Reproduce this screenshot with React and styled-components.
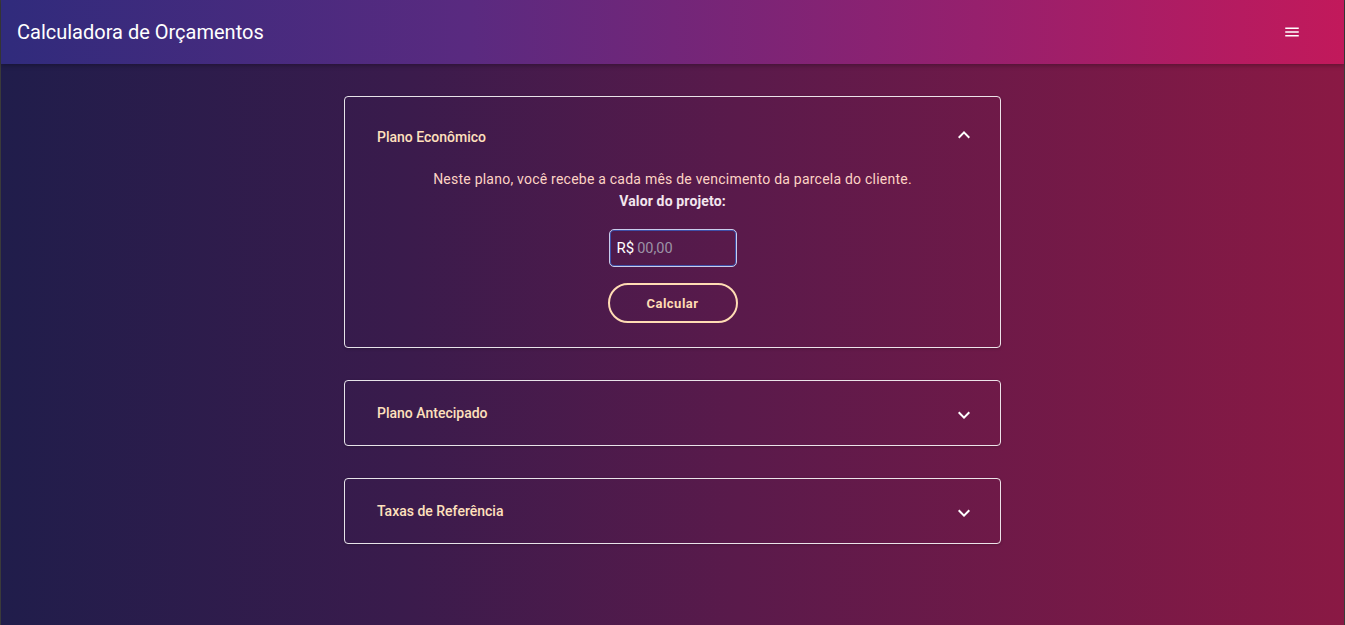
import React, { useState } from "react";
import styled, { createGlobalStyle } from "styled-components";

const GlobalStyle = createGlobalStyle`
  * { box-sizing: border-box; }
  html, body { margin: 0; padding: 0; }
  body {
    font-family: "Roboto", "Liberation Sans", sans-serif;
    background: #2b2b2b;
  }
`;

const Page = styled.div`
  min-height: 625px;
  border-left: 1px solid #3a3a3a;
  border-right: 1px solid #3a3a3a;
  background: linear-gradient(90deg, #201d4b 0%, #3a1b4c 30%, #5a1a4b 55%, #8a1944 100%);
  display: flex;
  flex-direction: column;
`;

const TopBar = styled.header`
  height: 64px;
  display: flex;
  align-items: center;
  justify-content: space-between;
  padding: 0 40px 0 16px;
  background: linear-gradient(90deg, #302b7c 0%, #5a2a80 35%, #8a2272 65%, #c2195b 100%);
  box-shadow: 0 2px 4px rgba(0, 0, 0, 0.25);
`;

const Title = styled.h1`
  margin: 0;
  font-size: 20px;
  font-weight: 400;
  color: #ffffff;
  letter-spacing: 0;
`;

const MenuButton = styled.button`
  width: 24px;
  height: 24px;
  padding: 0;
  border: none;
  background: none;
  display: flex;
  align-items: center;
  justify-content: center;
  color: #ffffff;
`;

const Content = styled.main`
  width: 657px;
  margin: 32px auto 0;
  display: flex;
  flex-direction: column;
  gap: 32px;
`;

const Card = styled.section`
  border: 1px solid rgba(255, 255, 255, 0.88);
  border-radius: 4px;
  box-shadow: 0 1px 3px rgba(0, 0, 0, 0.2);
`;

const Summary = styled.div`
  display: flex;
  align-items: flex-start;
  justify-content: space-between;
  height: ${(p) => (p.$open ? "71px" : "64px")};
  padding: ${(p) => (p.$open ? "32px" : "24px")} 24px 0 32px;
  cursor: pointer;
`;

const SummaryTitle = styled.span`
  font-size: 14px;
  line-height: 16px;
  font-weight: 500;
  color: #ffe0bd;
`;

const Chevron = styled.span`
  width: 24px;
  height: 24px;
  margin-top: ${(p) => (p.$open ? "-6px" : "-2px")};
  color: #ffffff;
  display: flex;
`;

const Details = styled.div`
  display: flex;
  flex-direction: column;
  align-items: center;
  padding-bottom: 24px;
`;

const Description = styled.p`
  margin: 0;
  font-size: 14px;
  line-height: 22px;
  letter-spacing: 0.23px;
  color: #fdd3c4;
`;

const Label = styled.p`
  margin: 0;
  font-size: 14px;
  line-height: 22px;
  font-weight: 700;
  letter-spacing: 0.15px;
  color: #f3e6ee;
`;

const InputBox = styled.label`
  margin-top: 17px;
  width: 128px;
  height: 38px;
  display: flex;
  align-items: center;
  gap: 3px;
  padding: 0 7px;
  border: 1px solid #c9cdec;
  box-shadow: inset 0 0 0 1px #3f4fa8;
  border-radius: 5px;
`;

const Prefix = styled.span`
  font-size: 15px;
  color: #ffffff;
`;

const Field = styled.input`
  width: 80px;
  border: none;
  background: transparent;
  outline: none;
  padding: 0;
  font-family: inherit;
  font-size: 14.5px;
  color: #ffffff;
  &::placeholder {
    color: #9c93a6;
  }
`;

const CalcButton = styled.button`
  margin-top: 16px;
  width: 130px;
  height: 40px;
  border: 2px solid #ffdcb4;
  border-radius: 20px;
  background: transparent;
  font-family: inherit;
  font-size: 13px;
  font-weight: 700;
  letter-spacing: 0.5px;
  color: #ffdcb4;
  cursor: pointer;
`;

const ExpandIcon = ({ up }) => (
  <svg width="24" height="24" viewBox="0 0 24 24" fill="currentColor">
    {up ? (
      <path d="m12 8-6 6 1.41 1.41L12 10.83l4.59 4.58L18 14z" />
    ) : (
      <path d="M16.59 8.59 12 13.17 7.41 8.59 6 10l6 6 6-6z" />
    )}
  </svg>
);

const MenuIcon = () => (
  <svg width="18" height="18" viewBox="0 0 24 24" fill="currentColor">
    <path d="M3 18h18v-2H3zm0-5h18v-2H3zm0-7v2h18V6z" />
  </svg>
);

const plans = [
  {
    id: "economico",
    title: "Plano Econômico",
    text: "Neste plano, você recebe a cada mês de vencimento da parcela do cliente.",
  },
  {
    id: "antecipado",
    title: "Plano Antecipado",
    text: "Neste plano, você recebe o valor total antecipado.",
  },
  {
    id: "taxas",
    title: "Taxas de Referência",
    text: "Taxas aplicadas em cada parcelamento.",
  },
];

const PlanCard = ({ plan, open, onToggle }) => (
  <Card>
    <Summary $open={open} onClick={onToggle}>
      <SummaryTitle>{plan.title}</SummaryTitle>
      <Chevron $open={open}>
        <ExpandIcon up={open} />
      </Chevron>
    </Summary>
    {open && (
      <Details>
        <Description>{plan.text}</Description>
        <Label>Valor do projeto:</Label>
        <InputBox>
          <Prefix>R$</Prefix>
          <Field placeholder="00,00" />
        </InputBox>
        <CalcButton>Calcular</CalcButton>
      </Details>
    )}
  </Card>
);

export default function App() {
  const [openId, setOpenId] = useState("economico");
  return (
    <>
      <GlobalStyle />
      <Page>
        <TopBar>
          <Title>Calculadora de Orçamentos</Title>
          <MenuButton aria-label="menu">
            <MenuIcon />
          </MenuButton>
        </TopBar>
        <Content>
          {plans.map((plan) => (
            <PlanCard
              key={plan.id}
              plan={plan}
              open={openId === plan.id}
              onToggle={() => setOpenId(openId === plan.id ? null : plan.id)}
            />
          ))}
        </Content>
      </Page>
    </>
  );
}
